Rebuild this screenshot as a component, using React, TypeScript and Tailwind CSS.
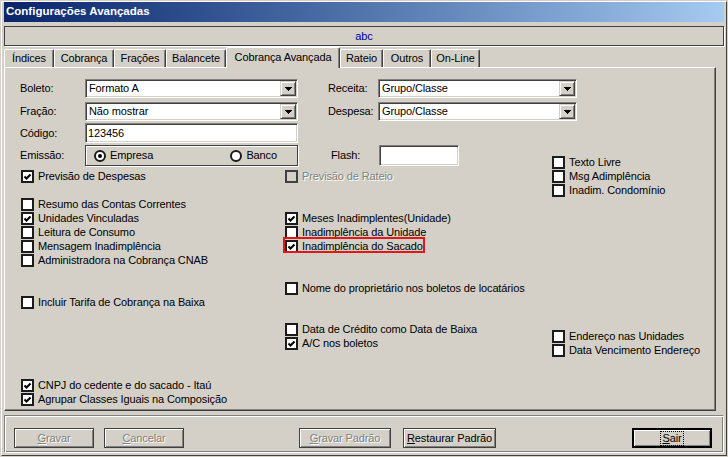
import React from 'react';

const Box = ({ checked, disabled }: { checked?: boolean; disabled?: boolean }) => (
  <span
    className={`flex h-[13px] w-[13px] shrink-0 items-center justify-center border-2 ${
      disabled ? 'border-[#404040] bg-[#d4d0c8]' : 'border-[#1c1c1c] bg-white'
    }`}
  >
    {checked && (
      <svg width="9" height="9" viewBox="0 0 9 9">
        <path d="M1.5 4.5 L3.5 6.5 L7.5 2.5" fill="none" stroke="#000" strokeWidth="2.1" />
      </svg>
    )}
  </span>
);

const Check = ({
  label,
  checked,
  disabled,
  className = '',
}: {
  label: string;
  checked?: boolean;
  disabled?: boolean;
  className?: string;
}) => (
  <div className={`flex h-[14px] items-center gap-[4px] whitespace-nowrap ${className}`}>
    <Box checked={checked} disabled={disabled} />
    <span className={disabled ? 'text-[#808080] [text-shadow:1px_1px_0_#fff]' : ''}>{label}</span>
  </div>
);

const Radio = ({ checked }: { checked?: boolean }) => (
  <span className="flex h-[12px] w-[12px] items-center justify-center rounded-full border-2 border-[#1c1c1c] bg-white">
    {checked && <span className="h-[4px] w-[4px] rounded-full bg-black" />}
  </span>
);

const Arrow = () => (
  <span className="flex h-full w-[16px] shrink-0 items-center justify-center border border-t-[#d4d0c8] border-l-[#d4d0c8] border-r-[#404040] border-b-[#404040] bg-[#d4d0c8] shadow-[inset_1px_1px_0_#fff,inset_-1px_-1px_0_#808080]">
    <svg width="7" height="4" viewBox="0 0 7 4">
      <path d="M0 0h7v1h-1v1h-1v1h-1v1h-1v-1h-1v-1h-1v-1h-1z" fill="#000" />
    </svg>
  </span>
);

const Select = ({ value, className }: { value: string; className: string }) => (
  <div
    className={`flex h-[19px] shrink-0 items-center border border-t-[#808080] border-l-[#808080] border-r-white border-b-white bg-white p-px shadow-[inset_1px_1px_0_#404040,inset_-1px_-1px_0_#d4d0c8] ${className}`}
  >
    <span className="flex-1 pl-[2px]">{value}</span>
    <Arrow />
  </div>
);

const Input = ({ value, className }: { value?: string; className: string }) => (
  <div
    className={`flex shrink-0 items-start border border-t-[#808080] border-l-[#808080] border-r-white border-b-white bg-white p-px pl-[2px] shadow-[inset_1px_1px_0_#404040,inset_-1px_-1px_0_#d4d0c8] ${className}`}
  >
    {value}
  </div>
);

const Btn = ({
  first,
  rest,
  className,
  disabled,
  def,
}: {
  first: string;
  rest: string;
  className: string;
  disabled?: boolean;
  def?: boolean;
}) => (
  <div
    className={`flex h-[20px] shrink-0 items-center justify-center bg-[#d4d0c8] ${
      def
        ? 'border-2 border-black shadow-[inset_1px_1px_0_#fff,inset_-1px_-1px_0_#808080]'
        : 'border border-[#404040] shadow-[inset_1px_1px_0_#fff,inset_-1px_-1px_0_#808080]'
    } ${className}`}
  >
    <span
      className={`${disabled ? 'text-[#808080] [text-shadow:1px_1px_0_#fff]' : ''} ${
        def ? 'flex h-[15px] items-center border border-dotted border-black px-px' : ''
      }`}
    >
      <span className="underline underline-offset-1">{first}</span>
      {rest}
    </span>
  </div>
);

const tabs = [
  { t: 'Índices', w: 'w-[50px]' },
  { t: 'Cobrança', w: 'w-[60px]' },
  { t: 'Frações', w: 'w-[52px]' },
  { t: 'Balancete', w: 'w-[60px]' },
  { t: 'Cobrança Avançada', w: 'w-[114px]', sel: true },
  { t: 'Rateio', w: 'w-[43px]' },
  { t: 'Outros', w: 'w-[48px]' },
  { t: 'On-Line', w: 'w-[49px]' },
];

export default function App() {
  return (
    <div className="h-[457px] w-[728px] border border-[#d4d0c8] bg-[#d4d0c8] font-['Liberation_Sans',Arial,sans-serif] text-[11px] tracking-[-0.12px] text-black">
      <div className="flex h-full flex-col border border-t-white border-l-white border-r-[#404040] border-b-[#404040] px-[2px] pb-[2px]">
        {/* title */}
        <div className="flex h-[20px] shrink-0 items-center bg-linear-to-r from-[#0a246a] to-[#a6caf0] pl-[2px] text-[11.5px] font-bold tracking-normal text-white">
          Configurações Avançadas
        </div>

        {/* abc bar */}
        <div className="mt-[4px] flex h-[20px] shrink-0 items-center justify-center border border-[#404040] text-[#0000a0] shadow-[1px_1px_0_#fff]">
          abc
        </div>

        {/* tabs */}
        <div className="mt-px flex h-[20px] shrink-0 items-end">
          {tabs.map((tab) =>
            tab.sel ? (
              <div
                key={tab.t}
                className={`relative z-10 -mb-px flex h-[21px] items-center justify-center rounded-t-[2px] border-t border-l border-r border-t-white border-l-white border-r-[#404040] bg-[#d4d0c8] pb-[2px] shadow-[inset_-1px_0_0_#808080] ${tab.w}`}
              >
                {tab.t}
              </div>
            ) : (
              <div
                key={tab.t}
                className={`flex h-[18px] items-center justify-center rounded-t-[2px] border-t border-l border-r border-t-white border-l-white border-r-[#404040] shadow-[inset_-1px_0_0_#808080] ${tab.w}`}
              >
                {tab.t}
              </div>
            ),
          )}
        </div>

        {/* tab sheet */}
        <div className="relative h-[344px] w-[712px] shrink-0 border border-t-white border-l-white border-r-[#404040] border-b-[#404040] pt-[11px] pl-[15px] shadow-[inset_-1px_-1px_0_#808080]">
          <div className="flex h-[19px] items-center">
            <span className="w-[65px] shrink-0">Boleto:</span>
            <Select value="Formato A" className="w-[213px]" />
            <span className="ml-[30px] w-[50px] shrink-0">Receita:</span>
            <Select value="Grupo/Classe" className="w-[199px]" />
          </div>
          <div className="mt-[4px] flex h-[19px] items-center">
            <span className="w-[65px] shrink-0">Fração:</span>
            <Select value="Não mostrar" className="w-[213px]" />
            <span className="ml-[30px] w-[50px] shrink-0">Despesa:</span>
            <Select value="Grupo/Classe" className="w-[199px]" />
          </div>
          <div className="mt-[2px] flex h-[20px] items-center">
            <span className="w-[65px] shrink-0">Código:</span>
            <Input value="123456" className="h-[20px] w-[213px]" />
          </div>

          <div className="mt-[2px] flex">
            {/* left column */}
            <div className="flex w-[265px] shrink-0 flex-col">
              <div className="flex h-[21px] items-center">
                <span className="w-[65px] shrink-0">Emissão:</span>
                <div className="flex h-[21px] w-[213px] shrink-0 items-center border border-[#404040] pl-[8px] pr-[20px] shadow-[inset_1px_1px_0_#fff,1px_1px_0_#fff]">
                  <Radio checked />
                  <span className="ml-[4px]">Empresa</span>
                  <span className="ml-auto">
                    <Radio />
                  </span>
                  <span className="ml-[4px]">Banco</span>
                </div>
              </div>
              <Check className="mt-[3px] ml-px" label="Previsão de Despesas" checked />
              <Check className="mt-[14px] ml-px" label="Resumo das Contas Correntes" />
              <Check className="ml-px" label="Unidades Vinculadas" checked />
              <Check className="ml-px" label="Leitura de Consumo" />
              <Check className="ml-px" label="Mensagem Inadimplência" />
              <Check className="ml-px" label="Administradora na Cobrança CNAB" />
              <Check className="mt-[28px] ml-px" label="Incluir Tarifa de Cobrança na Baixa" />
              <Check className="mt-[69px] ml-px" label="CNPJ do cedente e do sacado - Itaú" checked />
              <Check className="ml-px" label="Agrupar Classes Iguais na Composição" checked />
            </div>

            {/* middle column */}
            <div className="flex w-[267px] shrink-0 flex-col">
              <div className="flex h-[21px] items-center pl-[46px]">
                <span className="w-[48px] shrink-0">Flash:</span>
                <Input className="h-[21px] w-[80px]" />
              </div>
              <Check className="mt-[3px]" label="Previsão de Rateio" disabled />
              <Check className="mt-[28px]" label="Meses Inadimplentes(Unidade)" checked />
              <Check label="Inadimplência da Unidade" />
              <div className="relative">
                <Check label="Inadimplência do Sacado" checked />
                <span className="absolute top-[-2px] left-[-2px] h-[16px] w-[142px] border-2 border-[#e01818]" />
              </div>
              <Check className="mt-[28px]" label="Nome do proprietário nos boletos de locatários" />
              <Check className="mt-[27px]" label="Data de Crédito como Data de Baixa" />
              <Check label="A/C nos boletos" checked />
            </div>

            {/* right column */}
            <div className="flex flex-1 flex-col">
              <Check className="mt-[10px]" label="Texto Livre" />
              <Check label="Msg Adimplência" />
              <Check label="Inadim. Condomínio" />
              <Check className="mt-[132px]" label="Endereço nas Unidades" />
              <Check label="Data Vencimento Endereço" />
            </div>
          </div>
        </div>

        {/* bottom buttons */}
        <div className="mt-[4px] flex h-[38px] shrink-0 items-start border border-t-[#808080] border-l-[#808080] border-r-white border-b-white pt-[12px] pl-[9px] shadow-[inset_1px_1px_0_#fff,inset_-1px_-1px_0_#808080]">
          <Btn first="G" rest="ravar" className="w-[80px]" disabled />
          <Btn first="C" rest="ancelar" className="ml-[10px] w-[80px]" disabled />
          <Btn first="G" rest="ravar Padrão" className="ml-[115px] w-[92px]" disabled />
          <Btn first="R" rest="estaurar Padrão" className="ml-[12px] w-[93px]" />
          <Btn first="S" rest="air" className="ml-[136px] w-[80px]" def />
        </div>
      </div>
    </div>
  );
}
